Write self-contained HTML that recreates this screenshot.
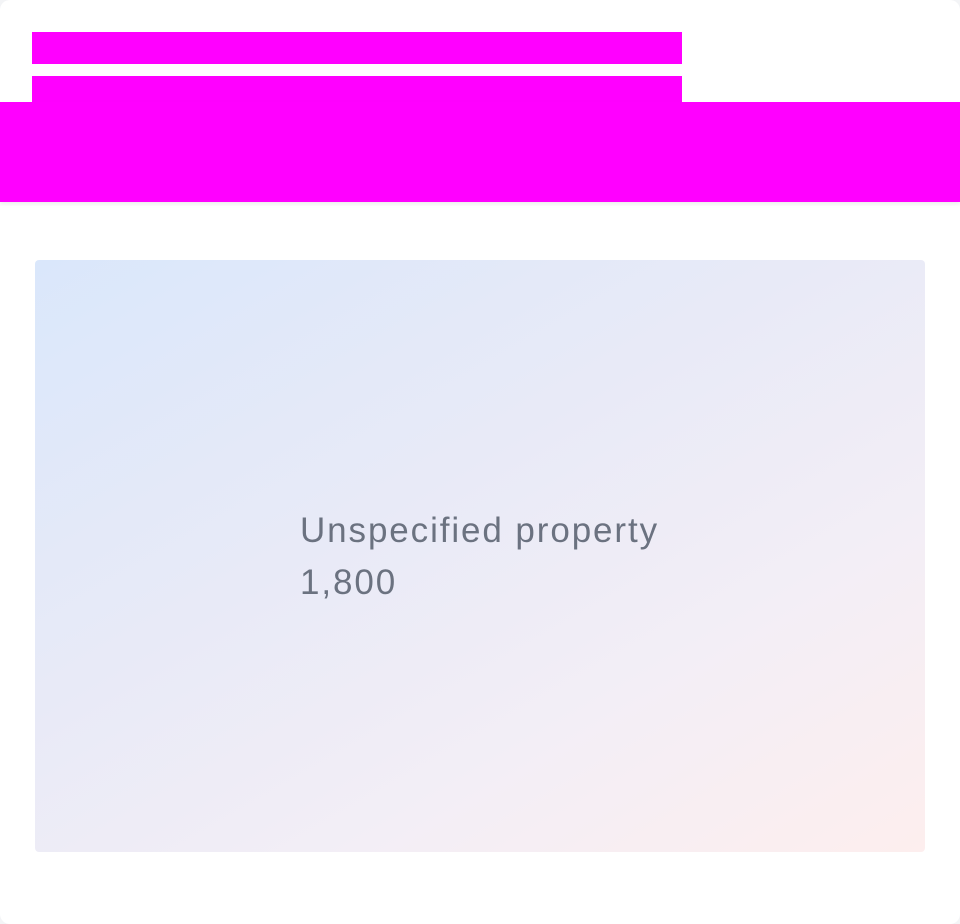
<!DOCTYPE html>
<html><head><style>
html,body{margin:0;padding:0;background:#f3f4f6}
body{width:960px;height:924px;position:relative;overflow:hidden;font-family:"Liberation Sans",sans-serif}
.page{position:absolute;left:0;top:0;width:960px;height:924px;background:#fff;border-radius:10px}
.m{position:absolute;background:#ff00ff}
.card{position:absolute;left:35px;top:260px;width:890px;height:592px;border-radius:4px;background:linear-gradient(150deg,#dae7fb 0%,#e8eaf7 40%,#f3eef6 70%,#fdeeee 100%)}
.t{position:absolute;left:300px;top:505px;font-size:35px;line-height:52px;color:#6b7280;letter-spacing:1.9px}
</style></head><body>
<div class="page">
<div class="m" style="left:32px;top:32px;width:650px;height:32px"></div>
<div class="m" style="left:32px;top:76px;width:650px;height:30px"></div>
<div class="m" style="left:0;top:102px;width:960px;height:100px;box-shadow:0 2px 4px rgba(0,0,0,0.08)"></div>
<div class="card"></div>
<div class="t">Unspecified property<br>1,800</div>
</div>
</body></html>
